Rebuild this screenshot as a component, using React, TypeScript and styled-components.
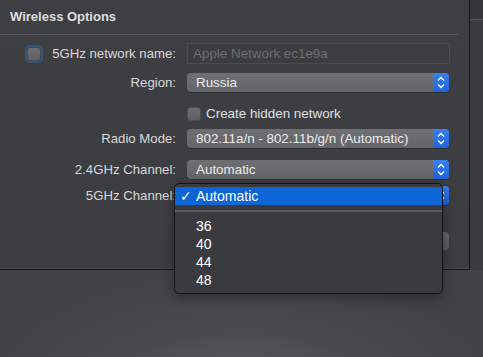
import React from "react";
import styled, { createGlobalStyle } from "styled-components";

const GlobalStyle = createGlobalStyle`
  html, body {
    margin: 0;
    padding: 0;
    width: 483px;
    height: 357px;
    overflow: hidden;
    font-family: "Liberation Sans", Arial, sans-serif;
  }
`;

const channels = ["36", "40", "44", "48"];

const Stepper = () => (
  <StepperBox>
    <svg width="16" height="19" viewBox="0 0 16 19">
      <path d="M5 7.5 L8 4.5 L11 7.5" stroke="#fff" strokeWidth="1.3" fill="none" />
      <path d="M5 11.5 L8 14.5 L11 11.5" stroke="#fff" strokeWidth="1.3" fill="none" />
    </svg>
  </StepperBox>
);

// while the menu is open it covers the popup, so the popup's own label is not drawn
const Popup = ({ value, open }: { value: string; open?: boolean }) => (
  <PopupBox>
    <PopupText>{open ? "" : value}</PopupText>
    <Stepper />
  </PopupBox>
);

const App = () => (
  <Stage>
    <GlobalStyle />
    <Top>
      <Panel>
        <Header>Wireless Options</Header>
        <Form>
          <Row $height={21} $top={8}>
            <Label>
              <Checkbox $focused />
              <span>5GHz network name:</span>
            </Label>
            <TextField placeholder="Apple Network ec1e9a" disabled />
          </Row>
          <Row $height={19} $top={9}>
            <Label>Region:</Label>
            <Popup value="Russia" />
          </Row>
          <Row $height={19} $top={12}>
            <span />
            <CheckRow>
              <Checkbox />
              <span>Create hidden network</span>
            </CheckRow>
          </Row>
          <Row $height={19} $top={6}>
            <Label>Radio Mode:</Label>
            <Popup value="802.11a/n - 802.11b/g/n (Automatic)" />
          </Row>
          <Row $height={19} $top={12}>
            <Label>2.4GHz Channel:</Label>
            <Popup value="Automatic" />
          </Row>
          <Row $height={19} $top={7}>
            <Label>5GHz Channel:</Label>
            <Popup value="Automatic" open />
          </Row>
          <Row $height={18} $top={27}>
            <span />
            <Button />
          </Row>
        </Form>
      </Panel>
      <SideStrip>
        <SideHeader />
      </SideStrip>
    </Top>

    <Menu>
      <MenuItem $selected>
        <CheckSlot>✓</CheckSlot>
        Automatic
      </MenuItem>
      <MenuSeparator />
      {channels.map((c) => (
        <MenuItem key={c}>
          <CheckSlot />
          {c}
        </MenuItem>
      ))}
    </Menu>
  </Stage>
);

const Stage = styled.div`
  position: relative;
  width: 483px;
  height: 357px;
  overflow: hidden;
  background: radial-gradient(ellipse 55% 40% at 50% 115%, #626568 0%, #494c4f 55%, #404346 100%);
`;

const Top = styled.div`
  display: flex;
  height: 270px;
`;

const Panel = styled.div`
  box-sizing: border-box;
  width: 470px;
  height: 270px;
  background: linear-gradient(180deg, #3d3f42 0%, #3b3d40 100%);
  border-right: 1px solid #141516;
  border-bottom: 1px solid #141516;
  box-shadow: inset 0 -1px 0 #4c4e51;
`;

const Header = styled.div`
  box-sizing: border-box;
  height: 35px;
  margin-right: 11px;
  padding: 8px 0 0 10px;
  line-height: 18px;
  font-size: 13px;
  font-weight: bold;
  color: #dedede;
  border-bottom: 1px solid #545659;
`;

const Form = styled.div`
  display: flex;
  flex-direction: column;
`;

const Row = styled.div<{ $height: number; $top: number }>`
  display: grid;
  grid-template-columns: 176px 263px;
  column-gap: 11px;
  align-items: center;
  height: ${(p) => p.$height}px;
  margin-top: ${(p) => p.$top}px;
`;

const Label = styled.div`
  display: flex;
  justify-content: flex-end;
  align-items: center;
  gap: 11px;
  font-size: 13.2px;
  color: #d9d9d9;
  white-space: nowrap;
`;

const Checkbox = styled.span<{ $focused?: boolean }>`
  box-sizing: border-box;
  display: inline-block;
  width: 14px;
  height: 14px;
  border-radius: 3px;
  border: 1px solid #4a4c4f;
  background: linear-gradient(180deg, #6c6e71 0%, #5e6063 100%);
  box-shadow: ${(p) => (p.$focused ? "0 0 0 2px rgba(52, 92, 140, 0.75)" : "none")};
`;

const CheckRow = styled.div`
  display: flex;
  align-items: center;
  gap: 5px;
  font-size: 13.4px;
  color: #e0e0e0;
`;

const TextField = styled.input`
  box-sizing: border-box;
  width: 263px;
  height: 21px;
  margin: 0;
  padding: 0 5px;
  border: 1px solid #4a4c4f;
  background: #3b3d40;
  font-family: "Liberation Sans", Arial, sans-serif;
  font-size: 13.4px;
  outline: none;

  &::placeholder {
    color: #6c6e71;
  }
`;

const PopupBox = styled.div`
  display: flex;
  align-items: center;
  width: 262px;
  height: 19px;
  border-radius: 4px;
  background: linear-gradient(180deg, #6d6f72 0%, #636568 100%);
  box-shadow: 0 1px 0 rgba(0, 0, 0, 0.25);
`;

const PopupText = styled.span`
  flex: 1;
  padding-left: 9px;
  font-size: 13.4px;
  color: #ececec;
  white-space: nowrap;
`;

const StepperBox = styled.span`
  display: flex;
  width: 16px;
  height: 19px;
  border-radius: 0 4px 4px 0;
  background: linear-gradient(180deg, #3a80f2 0%, #1f63d8 100%);
`;

const Button = styled.div`
  justify-self: end;
  width: 80px;
  height: 18px;
  margin-right: 1px;
  border-radius: 4px;
  background: linear-gradient(180deg, #626467 0%, #5a5c5f 100%);
`;

const SideStrip = styled.div`
  flex: 1;
  height: 270px;
  background: #393b3e;
`;

const SideHeader = styled.div`
  height: 19px;
  background: #35373a;
  border-bottom: 1px solid #505255;
`;

const Menu = styled.div`
  position: absolute;
  left: 174px;
  top: 183px;
  box-sizing: border-box;
  width: 269px;
  height: 111px;
  padding: 3px 0 4px;
  border: 1px solid #141415;
  border-radius: 5px;
  background: #3a3b3e;
  box-shadow: 0 4px 12px rgba(0, 0, 0, 0.35);
`;

const MenuItem = styled.div<{ $selected?: boolean }>`
  display: flex;
  align-items: center;
  height: 18px;
  padding-left: 5px;
  font-size: 14px;
  color: #ffffff;
  background: ${(p) => (p.$selected ? "#0e65d6" : "transparent")};
`;

const CheckSlot = styled.span`
  width: 16px;
  font-size: 14px;
  font-family: "DejaVu Sans", sans-serif;
`;

const MenuSeparator = styled.div`
  height: 12px;
  display: flex;
  align-items: center;

  &::after {
    content: "";
    flex: 1;
    height: 2px;
    background: #5a5c5f;
  }
`;

export default App;
